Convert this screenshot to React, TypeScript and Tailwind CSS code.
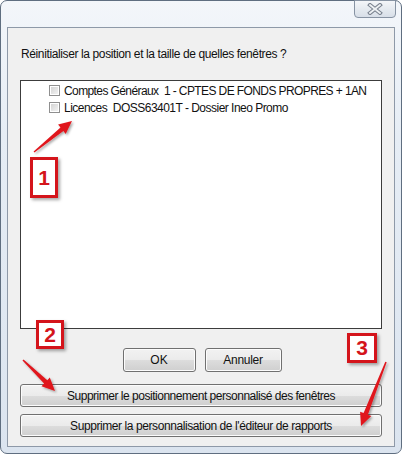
import React from "react";

type Pt = [number, number];

function arrowPoints(tail: Pt, tip: Pt): string {
  const dx = tip[0] - tail[0];
  const dy = tip[1] - tail[1];
  const len = Math.hypot(dx, dy);
  const ux = dx / len;
  const uy = dy / len;
  const nx = -uy;
  const ny = ux;
  const headLen = 13;
  const bx = tip[0] - ux * headLen;
  const by = tip[1] - uy * headLen;
  const p = (x: number, y: number) => `${x.toFixed(1)},${y.toFixed(1)}`;
  return [
    p(tail[0] + nx * 0.7, tail[1] + ny * 0.7),
    p(bx + nx * 2.3, by + ny * 2.3),
    p(bx + nx * 6, by + ny * 6),
    p(tip[0], tip[1]),
    p(bx - nx * 6, by - ny * 6),
    p(bx - nx * 2.3, by - ny * 2.3),
    p(tail[0] - nx * 0.7, tail[1] - ny * 0.7),
  ].join(" ");
}

function Checkbox() {
  return (
    <div className="w-[11px] h-[11px] border border-[#8f8f8f] bg-white p-[1px] shrink-0">
      <div className="w-full h-full bg-gradient-to-br from-[#d4d4d4] to-[#f2f2f2]" />
    </div>
  );
}

function WinButton({ children, className = "" }: { children: React.ReactNode; className?: string }) {
  return (
    <div
      className={`flex items-center justify-center rounded-[3px] border border-[#707070] bg-[linear-gradient(#f2f2f2_0%,#ebebeb_50%,#dddddd_50%,#cfcfcf_100%)] text-[12px] text-[#111] shadow-[inset_0_0_0_1px_#fcfcfc] ${className}`}
    >
      {children}
    </div>
  );
}

function Badge({ n, className }: { n: string; className: string }) {
  return (
    <div
      className={`absolute flex items-center justify-center bg-white border-[3px] border-[#d4141b] shadow-[2px_2px_3px_rgba(0,0,0,0.35)] text-[#d4141b] font-bold text-[21px] font-['Liberation_Sans',Arial,sans-serif] ${className}`}
    >
      {n}
    </div>
  );
}

export default function App() {
  return (
    <div className="relative w-[402px] h-[454px] overflow-hidden bg-white font-['Liberation_Sans',Arial,sans-serif]">
      <div className="w-[402px] h-[454px] rounded-[7px] border border-[#5f6e80] bg-[linear-gradient(180deg,#f3f6fa_0%,#e6edf5_30%,#dbe4ef_100%)] flex flex-col">
        {/* Title bar */}
        <div className="h-[26px] flex justify-end pr-[5px]">
          <div className="w-[42px] h-[18px] -mt-px rounded-b-[4px] border border-[#8793a3] bg-[linear-gradient(180deg,#f4f6f9_0%,#e4e9ef_55%,#d8dfe8_100%)] flex items-center justify-center">
            <svg width="16" height="12" viewBox="0 0 16 12">
              <path d="M3 2 L13 10 M13 2 L3 10" stroke="#7b8390" strokeWidth="4" strokeLinecap="square" fill="none" />
              <path d="M3 2 L13 10 M13 2 L3 10" stroke="#eef1f4" strokeWidth="1.8" strokeLinecap="square" fill="none" />
            </svg>
          </div>
        </div>
        {/* Frame body */}
        <div className="flex-1 px-[6px] pb-[6px]">
          <div className="h-full border border-[#8e99a8] bg-[#f0f0f0] flex flex-col px-[12px]">
            <div className="mt-[18px] h-[16px] leading-[16px] pl-[1px] text-[12px] text-[#111] tracking-[-0.38px]">
              Réinitialiser la position et la taille de quelles fenêtres ?
            </div>
            <div className="mt-[18px] h-[249px] border border-[#3c3c3c] bg-white pt-[1px]">
              <div className="h-[17px] flex items-center pl-[28px] gap-[4px] text-[12px] text-[#111] tracking-[-0.6px]">
                <Checkbox />
                <span className="whitespace-pre">Comptes Généraux  1 - CPTES DE FONDS PROPRES + 1AN</span>
              </div>
              <div className="h-[17px] flex items-center pl-[28px] gap-[4px] text-[12px] text-[#111] tracking-[-0.52px]">
                <Checkbox />
                <span className="whitespace-pre">Licences  DOSS63401T - Dossier Ineo Promo</span>
              </div>
            </div>
            <div className="mt-[19px] flex justify-center gap-[9px] pl-[2px]">
              <WinButton className="w-[73px] h-[24px] border-[#3d3d3d] shadow-[inset_0_0_0_1px_#9a9a9a]">OK</WinButton>
              <WinButton className="w-[77px] h-[24px] tracking-[-0.3px]">Annuler</WinButton>
            </div>
            <WinButton className="mt-[12px] h-[23px] tracking-[-0.48px]">
              Supprimer le positionnement personnalisé des fenêtres
            </WinButton>
            <WinButton className="mt-[7px] h-[23px] tracking-[-0.42px]">
              Supprimer la personnalisation de l'éditeur de rapports
            </WinButton>
          </div>
        </div>
      </div>

      {/* Annotations */}
      <Badge n="1" className="left-[30px] top-[157px] w-[28px] h-[41px]" />
      <Badge n="2" className="left-[36px] top-[320px] w-[28px] h-[29px]" />
      <Badge n="3" className="left-[347px] top-[333px] w-[30px] h-[30px]" />
      <svg className="absolute left-0 top-0 pointer-events-none" width="402" height="454" viewBox="0 0 402 454">
        <defs>
          <filter id="sh" x="-20%" y="-20%" width="140%" height="140%">
            <feDropShadow dx="1.5" dy="1.5" stdDeviation="1.2" floodColor="#000" floodOpacity="0.35" />
          </filter>
        </defs>
        <g fill="#e0161d" filter="url(#sh)">
          <polygon points={arrowPoints([34, 152], [72, 121])} />
          <polygon points={arrowPoints([23, 360], [55, 391])} />
          <polygon points={arrowPoints([386, 362], [361, 426])} />
        </g>
      </svg>
    </div>
  );
}
